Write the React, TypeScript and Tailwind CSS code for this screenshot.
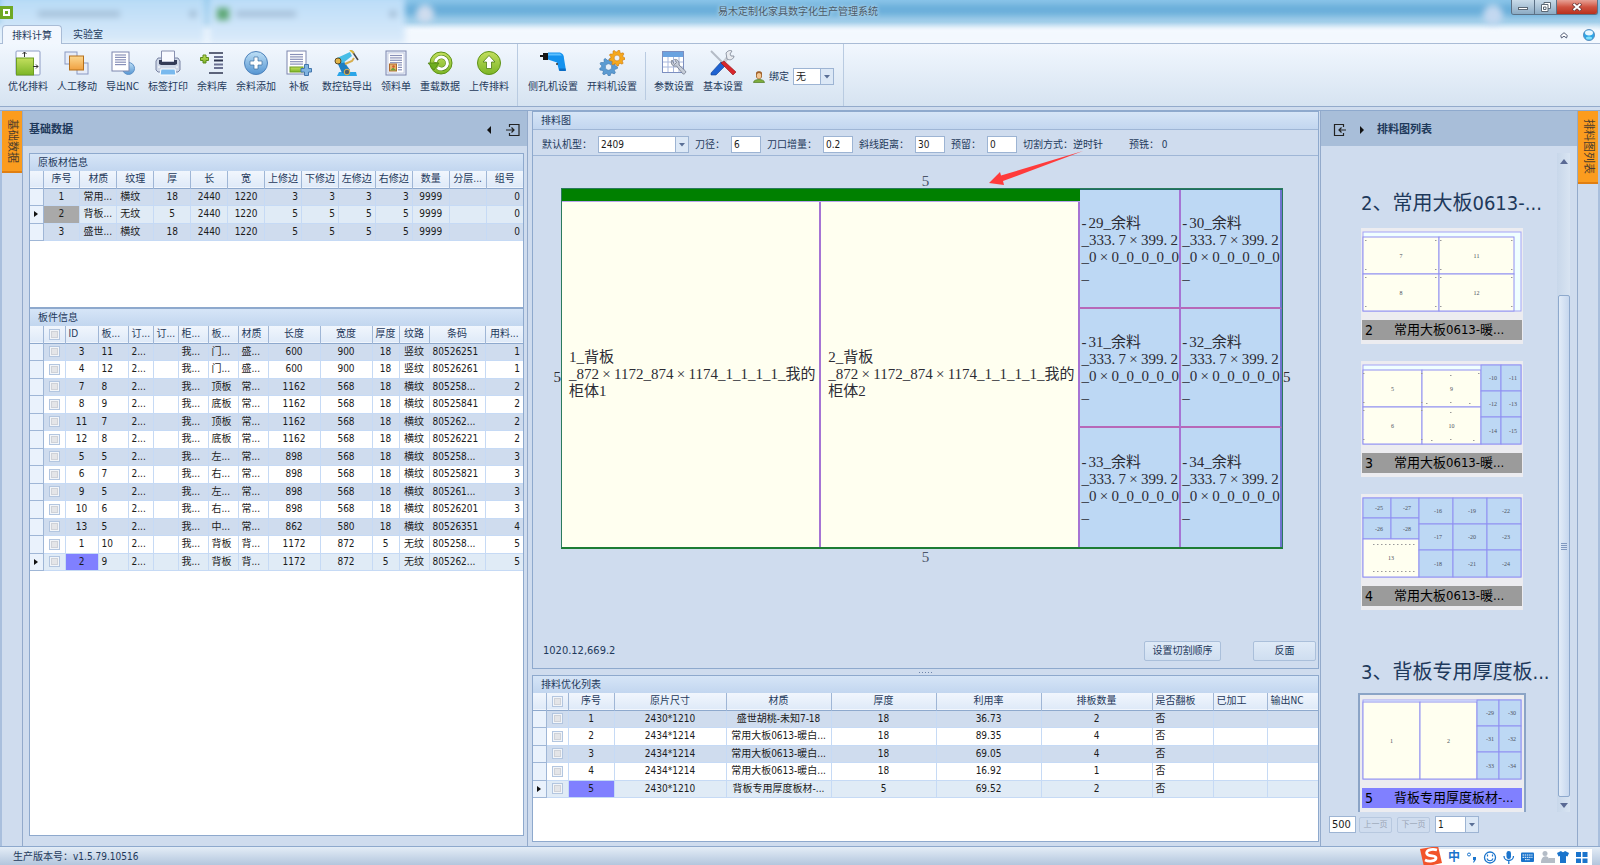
import type { ReactNode } from "react";
import { Fragment } from "react";
import clsx from "clsx";

// ---------- 数据 ----------

type Align = "left" | "center" | "right";

interface Column {
  title: string;
  width?: string;
  align?: Align;
  headAlign?: Align;
}

interface Piece {
  x: number;
  y: number;
  w: number;
  h: number;
  label: string;
  rest?: boolean;
}

interface SheetThumb {
  no: number;
  name: string;
  pieces: Piece[];
  holes?: [number, number][];
}

const BOARD_COLUMNS: Column[] = [
  { title: "序号" },
  { title: "材质", align: "left", headAlign: "center" },
  { title: "纹理", align: "left", headAlign: "center" },
  { title: "厚" },
  { title: "长" },
  { title: "宽" },
  { title: "上修边", align: "right" },
  { title: "下修边", align: "right" },
  { title: "左修边", align: "right" },
  { title: "右修边", align: "right" },
  { title: "数量" },
  { title: "分层..." },
  { title: "组号", align: "right" },
];

const BOARD_ROWS = [
  ["1", "常用...", "横纹", "18", "2440", "1220", "3", "3", "3", "3", "9999", "", "0"],
  ["2", "背板...", "无纹", "5", "2440", "1220", "5", "5", "5", "5", "9999", "", "0"],
  ["3", "盛世...", "横纹", "18", "2440", "1220", "5", "5", "5", "5", "9999", "", "0"],
];

const PART_COLUMNS: Column[] = [
  { title: "ID", width: "w-[33px]", headAlign: "left" },
  { title: "板...", width: "w-[30px]", align: "left" },
  { title: "订...", width: "w-[25px]", align: "left" },
  { title: "订...", width: "w-[25px]", align: "left" },
  { title: "柜...", width: "w-[30px]", align: "left" },
  { title: "板...", width: "w-[30px]", align: "left" },
  { title: "材质", width: "w-[30px]", align: "left" },
  { title: "长度", width: "w-[52px]" },
  { title: "宽度", width: "w-[52px]" },
  { title: "厚度", width: "w-[27px]" },
  { title: "纹路", width: "w-[30px]" },
  { title: "条码", width: "w-[56px]", align: "left", headAlign: "center" },
  { title: "用料...", align: "right" },
];

const PART_ROWS = [
  ["3", "11", "2...", "", "我...", "门...", "盛...", "600", "900", "18", "竖纹", "80526251", "1"],
  ["4", "12", "2...", "", "我...", "门...", "盛...", "600", "900", "18", "竖纹", "80526261", "1"],
  ["7", "8", "2...", "", "我...", "顶板", "常...", "1162", "568", "18", "横纹", "805258...", "2"],
  ["8", "9", "2...", "", "我...", "底板", "常...", "1162", "568", "18", "横纹", "80525841", "2"],
  ["11", "7", "2...", "", "我...", "顶板", "常...", "1162", "568", "18", "横纹", "805262...", "2"],
  ["12", "8", "2...", "", "我...", "底板", "常...", "1162", "568", "18", "横纹", "80526221", "2"],
  ["5", "5", "2...", "", "我...", "左...", "常...", "898", "568", "18", "横纹", "805258...", "3"],
  ["6", "7", "2...", "", "我...", "右...", "常...", "898", "568", "18", "横纹", "80525821", "3"],
  ["9", "5", "2...", "", "我...", "左...", "常...", "898", "568", "18", "横纹", "805261...", "3"],
  ["10", "6", "2...", "", "我...", "右...", "常...", "898", "568", "18", "横纹", "80526201", "3"],
  ["13", "5", "2...", "", "我...", "中...", "常...", "862", "580", "18", "横纹", "80526351", "4"],
  ["1", "10", "2...", "", "我...", "背板", "背...", "1172", "872", "5", "无纹", "805258...", "5"],
  ["2", "9", "2...", "", "我...", "背板", "背...", "1172", "872", "5", "无纹", "805262...", "5"],
];

const RESULT_COLUMNS: Column[] = [
  { title: "序号", width: "w-[46px]" },
  { title: "原片尺寸", width: "w-[112px]" },
  { title: "材质", width: "w-[105px]" },
  { title: "厚度", width: "w-[105px]" },
  { title: "利用率", width: "w-[105px]" },
  { title: "排板数量", width: "w-[111px]" },
  { title: "是否翻板", width: "w-[61px]", align: "left" },
  { title: "已加工", width: "w-[54px]", align: "left" },
  { title: "输出NC", align: "left" },
];

const RESULT_ROWS = [
  ["1", "2430*1210", "盛世胡桃-未知7-18", "18", "36.73", "2", "否", "", ""],
  ["2", "2434*1214", "常用大板0613-暖白...", "18", "89.35", "4", "否", "", ""],
  ["3", "2434*1214", "常用大板0613-暖白...", "18", "69.05", "4", "否", "", ""],
  ["4", "2434*1214", "常用大板0613-暖白...", "18", "16.92", "1", "否", "", ""],
  ["5", "2430*1210", "背板专用厚度板材-...", "5", "69.52", "2", "否", "", ""],
];

const REST_NUMBERS = [29, 30, 31, 32, 33, 34];

// 两列三行的余料块
const restGrid = (xs: number[], labels: string[]): Piece[] =>
  labels.map((label, i) => ({
    x: xs[i % 2],
    y: Math.floor(i / 2) * 26,
    w: xs[(i % 2) + 1] - xs[i % 2],
    h: Math.floor(i / 2) === 2 ? 27 : 26,
    label,
    rest: true,
  }));

const SHEETS: SheetThumb[] = [
  {
    no: 2,
    name: "常用大板0613-暖...",
    pieces: [
      { x: 0, y: 5, w: 76, h: 37, label: "7" },
      { x: 76, y: 5, w: 75, h: 37, label: "11" },
      { x: 0, y: 42, w: 76, h: 37, label: "8" },
      { x: 76, y: 42, w: 75, h: 37, label: "12" },
    ],
    holes: [
      [3, 9], [73, 9], [78, 9], [149, 9], [3, 38], [73, 38], [78, 38], [149, 38],
      [3, 46], [73, 46], [78, 46], [149, 46], [3, 75], [73, 75], [78, 75], [149, 75],
    ],
  },
  {
    no: 3,
    name: "常用大板0613-暖...",
    pieces: [
      { x: 0, y: 5, w: 59, h: 37, label: "5" },
      { x: 59, y: 5, w: 59, h: 37, label: "9" },
      { x: 0, y: 42, w: 59, h: 37, label: "6" },
      { x: 59, y: 42, w: 59, h: 37, label: "10" },
      ...restGrid([118, 138, 158], ["-10", "-11", "-12", "-13", "-14", "-15"]),
    ],
    holes: [
      [1, 9], [59, 9], [116, 9], [88, 11], [1, 38], [59, 38], [64, 39], [88, 38], [107, 39],
      [1, 46], [59, 46], [88, 48], [1, 75], [59, 75], [69, 76], [88, 75], [111, 76],
    ],
  },
  {
    no: 4,
    name: "常用大板0613-暖...",
    pieces: [
      { x: 0, y: 0, w: 28, h: 20, label: "-25", rest: true },
      { x: 28, y: 0, w: 28, h: 20, label: "-27", rest: true },
      { x: 0, y: 20, w: 28, h: 21, label: "-26", rest: true },
      { x: 28, y: 20, w: 28, h: 21, label: "-28", rest: true },
      { x: 0, y: 41, w: 56, h: 38, label: "13" },
      ...[16, 17, 18, 19, 20, 21, 22, 23, 24].map((n, i) => ({
        x: 56 + Math.floor(i / 3) * 34,
        y: (i % 3) * 26,
        w: 34,
        h: i % 3 === 2 ? 27 : 26,
        label: `-${n}`,
        rest: true,
      })),
    ],
    holes: [11, 15, 19, 23, 27, 31, 35, 39, 43, 47, 51].flatMap((x): [number, number][] => [
      [x, 47],
      [x, 74],
    ]),
  },
];

const ACTIVE_SHEET: SheetThumb = {
  no: 5,
  name: "背板专用厚度板材-...",
  pieces: [
    { x: 0, y: 2, w: 57, h: 77, label: "1" },
    { x: 57, y: 2, w: 57, h: 77, label: "2" },
    ...restGrid([114, 136, 158], ["-29", "-30", "-31", "-32", "-33", "-34"]),
  ],
};

// ---------- 图标 ----------

function Icon({ children }: { children: ReactNode }) {
  return (
    <svg viewBox="0 0 26 26" className="h-[26px] w-[26px]" aria-hidden="true">
      {children}
    </svg>
  );
}

function PaperLines({ x, y, w, n }: { x: number; y: number; w: number; n: number }) {
  return (
    <g stroke="#8890b8" strokeWidth="1.2">
      {Array.from({ length: n }, (_, i) => (
        <path key={i} d={`M${x} ${y + i * 2.4}h${w}`} />
      ))}
    </g>
  );
}

const gearPath = (cx: number, cy: number, r: number, teeth: number) => {
  const pts: string[] = [];
  for (let i = 0; i < teeth * 4; i++) {
    const a = (i / (teeth * 4)) * Math.PI * 2;
    const rr = i % 4 < 2 ? r : r * 0.76;
    pts.push(`${(cx + Math.cos(a) * rr).toFixed(2)} ${(cy + Math.sin(a) * rr).toFixed(2)}`);
  }
  const hole = r * 0.36;
  return `M${pts.join("L")}Z M${cx - hole} ${cy}a${hole} ${hole} 0 1 0 ${hole * 2} 0a${hole} ${hole} 0 1 0 ${-hole * 2} 0Z`;
};

const icons = {
  optimize: (
    <Icon>
      <rect x="1" y="1" width="24" height="24" rx="1" fill="#fbfcff" stroke="#8d9cc4" />
      <rect x="1.5" y="8" width="17" height="17" fill="url(#green)" stroke="#6d9e22" />
      <path d="M9.500 7V2M7.500 4l2-2 2 2M18 16.500h5M21 14.500l2 2-2 2" fill="none" stroke="#333" />
    </Icon>
  ),
  move: (
    <Icon>
      <rect x="1" y="2" width="12" height="12" fill="#e6ecf8" stroke="#8a99c2" />
      <rect x="13" y="13" width="11" height="11" fill="#e6ecf8" stroke="#8a99c2" />
      <rect x="5.500" y="6" width="14" height="14" fill="url(#orange)" stroke="#b5701d" />
    </Icon>
  ),
  exportNc: (
    <Icon>
      <circle cx="18.500" cy="18.500" r="6" fill="url(#blue)" stroke="#5f92c8" />
      <rect x="2" y="2" width="17" height="19" fill="#fff" stroke="#7c86ae" />
      <PaperLines x={5} y={5} w={11} n={5} />
    </Icon>
  ),
  print: (
    <Icon>
      <path d="M3 8h20l2 3v9l-2 2H3l-2-2v-9z" fill="#cfd8e8" stroke="#7882a2" />
      <path d="M6.500 1h13v11h-13z" fill="#f8faff" stroke="#8890b0" />
      <path d="M4 10h3v2h12v-2h3v4l-2 1H6l-2-1z" fill="#333b57" />
      <path d="M6 19h14l1 6H5z" fill="#79b9ee" stroke="#fff" />
      <path d="M3 17h2M21 17h2" stroke="#fff" />
    </Icon>
  ),
  store: (
    <Icon>
      <path d="M4 5h3v2.500h2.500v3H7V13H4v-2.500H1.500v-3H4z" fill="url(#green)" stroke="#5c8a1c" />
      <path d="M10 3h14M10 23h14" stroke="#2f3650" strokeWidth="1.500" />
      <path d="M15 7h9M15 14.500h9M15 18h9" stroke="#6a7192" strokeWidth="2" />
      <path d="M15 10.500h9" stroke="#2f3650" strokeWidth="2" />
    </Icon>
  ),
  add: (
    <Icon>
      <circle cx="13" cy="13" r="11.500" fill="url(#blue)" stroke="#4f83bb" />
      <path d="M11 7h4v4h4v4h-4v4h-4v-4H7v-4h4z" fill="#fff" stroke="#3e6f9f" strokeWidth=".7" />
    </Icon>
  ),
  patch: (
    <Icon>
      <rect x="1" y="1" width="19" height="23" fill="#fff" stroke="#7c86ae" />
      <PaperLines x={4} y={4.5} w={13} n={5} />
      <rect x="4" y="17" width="13" height="5" fill="url(#green)" stroke="#6d9e22" />
      <path d="M18.500 14.500h4v4h3v3.500h-3v3.500h-4V22h-3.500v-3.500h3.500z" fill="#7fb4e0" stroke="#4477ad" />
    </Icon>
  ),
  robot: (
    <Icon>
      <path d="M5 22h17l1 4H3z" fill="#2aa5e8" />
      <path d="M3 12l5-3 8 11-3 4-5-1z" fill="#1e7fc2" />
      <path d="M3 8l13-6 2 4-9 7-5-1z" fill="#47bde6" />
      <path d="M11 14l7-3 2-3" fill="none" stroke="#d7ae4e" strokeWidth="2" />
      <path d="M18 1l6 9" stroke="#444" strokeWidth="1.500" />
      <path d="M16 0l4 3" stroke="#d9b93c" strokeWidth="2" />
      <circle cx="4" cy="11" r="3" fill="#e2b548" stroke="#5c4b25" />
      <circle cx="13" cy="22" r="2.800" fill="#51606e" stroke="#e2b548" />
    </Icon>
  ),
  picking: (
    <Icon>
      <rect x="3" y="1" width="20" height="24" fill="#e9eef8" stroke="#7c86ae" />
      <rect x="5" y="3" width="16" height="20" fill="#fff" stroke="#a8b2cf" strokeWidth=".6" />
      <PaperLines x={7} y={5.5} w={12} n={4} />
      <PaperLines x={15} y={15} w={4} n={3} />
      <rect x="6.500" y="14" width="7" height="7" fill="#e8b36a" stroke="#b06a2c" />
      <path d="M7 20.500l3-3 3.500 3" fill="#6f9f3a" />
      <circle cx="10.500" cy="16.500" r="1.300" fill="#d2582e" />
    </Icon>
  ),
  reload: (
    <Icon>
      <circle cx="14" cy="13" r="11" fill="url(#green)" stroke="#5d9217" />
      <path d="M10.500 17.500a6 6 0 1 0-2-5" fill="none" stroke="#4f7d15" strokeWidth="4" />
      <path d="M10.500 17.500a6 6 0 1 0-2-5.500" fill="none" stroke="#fff" strokeWidth="3" />
      <path d="M1 13h11l-5 7z" fill="#6fae20" stroke="#4f7d15" strokeWidth=".7" />
    </Icon>
  ),
  upload: (
    <Icon>
      <circle cx="13" cy="13" r="11.500" fill="url(#green)" stroke="#5d9217" />
      <path d="M13 5.500l6 6.500h-3.500v6.500h-5V12H7z" fill="#fff" stroke="#4f7d15" strokeWidth=".8" />
    </Icon>
  ),
  drill: (
    <Icon>
      <path d="M0 5h3v2H0zM3 3h5v7H3z" fill="#161616" />
      <path d="M8 2.500h12c3 1 4 3 4 6l2 12h-7l-2-8-9-3z" fill="#1492ee" />
      <path d="M8 3.500h12l2 2H8z" fill="#5cc0ff" />
      <path d="M19 18.500h6.500l.4 2.500h-6.500z" fill="#0a6cc4" />
      <circle cx="17" cy="14" r="1" fill="#333" />
    </Icon>
  ),
  gears: (
    <Icon>
      <path d={gearPath(9.5, 17, 9, 9)} fill="#5b9bd2" stroke="#3b74ab" strokeWidth=".6" fillRule="evenodd" />
      <path d={gearPath(18, 8, 8, 9)} fill="#f5a81d" stroke="#c97712" strokeWidth=".6" fillRule="evenodd" />
    </Icon>
  ),
  params: (
    <Icon>
      <rect x="1.500" y="1.500" width="21" height="21" fill="#fff" stroke="#7c8fc0" />
      <rect x="2" y="2" width="20" height="5" fill="#6aa3e0" />
      <path d="M2 12h20M2 17h20M7 7v15M12.500 7v15M18 7v15" stroke="#a9b8dc" />
      <path d="M11 10c-2 4 1 7 4.500 6l6 7.500c1 1.500 4-.5 3-2.500l-6.500-6c.5-4-2-6-4.500-5.500l2 3-2 2z" fill="#c5ccd8" stroke="#6d7688" strokeWidth=".8" />
    </Icon>
  ),
  tools: (
    <Icon>
      <path d="M1 1l13 13" stroke="#b4bbc6" strokeWidth="2" />
      <path d="M12 15l6-8" stroke="#c9ced6" strokeWidth="3.500" />
      <path d="M16 3c3-4 6-2 6-2l-2 3 1 2h3c0 3-4 5-7 3z" fill="#e8ebf0" stroke="#7b8493" strokeWidth=".8" />
      <path d="M11 12l4 4-9 9-5 0v-2z" fill="#1f63d2" stroke="#11408f" strokeWidth=".6" />
      <path d="M11 13l3-2 12 11-3 3z" fill="#d8262c" stroke="#8f1216" strokeWidth=".6" />
    </Icon>
  ),
};

function SvgDefs() {
  return (
    <svg className="absolute h-0 w-0" aria-hidden="true">
      <defs>
        <linearGradient id="green" x1="0" y1="0" x2="0" y2="1">
          <stop offset="0" stopColor="#c3df5e" />
          <stop offset="1" stopColor="#7cb526" />
        </linearGradient>
        <linearGradient id="orange" x1="0" y1="0" x2="0" y2="1">
          <stop offset="0" stopColor="#fcd890" />
          <stop offset="1" stopColor="#f0a040" />
        </linearGradient>
        <linearGradient id="blue" x1="0" y1="0" x2="0" y2="1">
          <stop offset="0" stopColor="#bfe0f6" />
          <stop offset="1" stopColor="#5595d2" />
        </linearGradient>
      </defs>
    </svg>
  );
}

// 停靠面板的箭头方框
function DockIcon({ flip }: { flip?: boolean }) {
  return (
    <svg viewBox="0 0 14 12" className="h-3 w-3.5" fill="none" stroke="#222" aria-hidden="true">
      {flip ? (
        <path d="M10.500 3V.500H1.500v11h9V9M13 6H6M8.500 3.500L6 6l2.500 2.500" strokeWidth="1.200" />
      ) : (
        <path d="M3.500 3V.500h9.500v11H3.500V9M0 6h8M5.500 3.500L8 6 5.500 8.500" strokeWidth="1.200" />
      )}
    </svg>
  );
}

// ---------- 通用控件 ----------

function Combo({ id, label, value, className }: { id: string; label?: string; value: string; className: string }) {
  return (
    <div className={clsx("relative flex h-[17px] border border-[#9db4d3] bg-white", className)}>
      <select
        id={id}
        aria-label={label}
        defaultValue={value}
        className="w-full appearance-none bg-transparent pl-0.5 text-[#1b1b1b] outline-none"
      >
        <option>{value}</option>
      </select>
      <span className="pointer-events-none absolute inset-y-0 right-0 flex w-[13px] items-center justify-center border-l border-[#9db4d3] bg-[#dce8f6]">
        <svg viewBox="0 0 6 4" className="h-1 w-1.5" fill="#5a6f96" aria-hidden="true">
          <path d="M0 0h6L3 3.500z" />
        </svg>
      </span>
    </div>
  );
}

function Field({ id, label, value }: { id: string; label: string; value: string }) {
  return (
    <>
      <label htmlFor={id}>{label}</label>
      <input
        id={id}
        defaultValue={value}
        className="h-[17px] w-[30px] border border-[#9db4d3] bg-white px-0.5 text-[#1b1b1b] outline-none"
      />
    </>
  );
}

function CheckBox({ label }: { label: string }) {
  return (
    <input
      type="checkbox"
      aria-label={label}
      className="mx-auto block h-[11px] w-[11px] appearance-none border border-[#b3c6e0] bg-[#e4e5e8] shadow-[inset_0_0_0_1px_#f2f5f9,inset_0_0_0_2px_#cfd2d8]"
    />
  );
}

function GroupTitle({ children }: { children: ReactNode }) {
  return (
    <h3 className="h-[17px] shrink-0 bg-linear-to-b from-[#d6e5f7] to-[#c2d6ef] pl-2 leading-[17px]">
      {children}
    </h3>
  );
}

const alignClass: Record<Align, string> = {
  left: "text-left",
  center: "text-center",
  right: "text-right",
};

interface DataGridProps {
  name: string;
  columns: Column[];
  rows: string[][];
  current: number;
  currentCell: string;
  checkable?: boolean;
}

function DataGrid({ name, columns, rows, current, currentCell, checkable }: DataGridProps) {
  return (
    <table className="w-full table-fixed border-collapse" aria-label={name}>
      <colgroup>
        <col className="w-[13px]" />
        {checkable && <col className="w-[22px]" />}
        {columns.map((col, i) => (
          <col key={i} className={col.width} />
        ))}
      </colgroup>
      <thead>
        <tr className="h-[17px] border-b border-[#8ea9cd] bg-linear-to-b from-[#f1f6fd] to-[#dfeaf8]">
          <th className="border-r border-[#9fb6d6] p-0" />
          {checkable && (
            <th className="border-r border-[#9fb6d6] p-0">
              <CheckBox label={`${name}全选`} />
            </th>
          )}
          {columns.map((col, i) => (
            <th
              key={i}
              className={clsx(
                "overflow-hidden border-r border-[#9fb6d6] p-0 font-normal whitespace-nowrap last:border-r-0",
                col.headAlign === "left" || (col.align === "left" && !col.headAlign) ? "pl-[3px] text-left" : "text-center",
              )}
            >
              {col.title}
            </th>
          ))}
        </tr>
      </thead>
      <tbody className="text-[#1b1b1b]">
        {rows.map((row, r) => (
          <tr
            key={r}
            className={clsx(
              "h-[17px] even:h-[18px]",
              r === current ? "bg-[#e0ebf6]" : r % 2 === 0 ? "bg-[#cfdcee]" : "bg-white",
            )}
          >
            <td className="border-r border-b border-[#9fb6d6] bg-[#eaf2fc] p-0">
              {r === current && (
                <svg viewBox="0 0 4 6" className="mx-auto h-1.5 w-1" aria-hidden="true">
                  <path d="M0 0l4 3-4 3z" fill="#111" />
                </svg>
              )}
            </td>
            {checkable && (
              <td className="border-r border-b border-[#c6daf5] p-0">
                <CheckBox label={`${name}第${r + 1}行`} />
              </td>
            )}
            {row.map((text, c) => (
              <td
                key={c}
                className={clsx(
                  "overflow-hidden border-r border-b border-[#c6daf5] px-[3px] py-0 leading-4 whitespace-nowrap last:border-r-0",
                  alignClass[columns[c].align ?? "center"],
                  r === current && c === 0 && currentCell,
                )}
              >
                {text}
              </td>
            ))}
          </tr>
        ))}
      </tbody>
    </table>
  );
}

// ---------- 标题栏与功能区 ----------

function TitleBar() {
  return (
    <header className="relative flex h-[44px] flex-col justify-between overflow-hidden bg-linear-to-b from-[#8cc6ea] via-[#a3cfea] via-50% to-[#f6faff] to-70%">
      {/* 玻璃边框后面透出的窗口 */}
      <div className="absolute inset-0 blur-[3px]" aria-hidden="true">
        <div className="absolute top-1 right-0 left-[405px] h-3 bg-[#57a3d3]/70" />
        <div className="absolute -top-1 left-0 h-12 w-[205px] bg-linear-to-b from-[#b5daf6] to-[#dcebfa]" />
        <div className="absolute -top-1 left-[209px] h-12 w-[196px] bg-linear-to-b from-[#b9dcf8] to-[#dcebfa]" />
        <div className="absolute top-[11px] left-[38px] h-1.5 w-[82px] bg-[#8fa9c2]/60" />
        <div className="absolute top-[11px] left-[190px] h-1.5 w-1.5 bg-[#8fa9c2]/80" />
        <div className="absolute top-[8px] left-[217px] h-3 w-3 bg-[#5ca774]" />
        <div className="absolute top-[11px] left-[236px] h-1.5 w-[60px] bg-[#8fa9c2]/60" />
        <div className="absolute top-[11px] left-[390px] h-1.5 w-1.5 bg-[#8fa9c2]/80" />
        <div className="absolute top-[5px] left-[416px] h-[18px] w-[18px] rounded-full bg-[#cfdcee]" />
        <div className="absolute top-[5px] right-[97px] h-[20px] w-[20px] rounded-full bg-[#c3d8f0]" />
        <div className="absolute right-0 bottom-0 left-[405px] h-[15px] bg-[#f3f8fe]" />
      </div>

      <div className="relative flex h-[25px] items-start">
        <span className="mt-1.5 flex h-[13px] w-[13px] items-center justify-center bg-[#6fa823]">
          <span className="h-[7px] w-[7px] border-2 border-white bg-[#6fa823]" />
        </span>
        <h1 className="flex-1 pl-[72px] text-center leading-6 text-[#4b5a68] [text-shadow:0_0_4px_#fff]">易木定制化家具数字化生产管理系统</h1>
        <div className="mr-0.5 flex h-[15px] overflow-hidden rounded-b-[3px] border border-t-0 border-[#5c7186] text-white">
          <button type="button" aria-label="最小化" className="flex w-[23px] items-end justify-center border-r border-[#5c7186] bg-linear-to-b from-[#c9dbe9] to-[#8cabc4] pb-1">
            <span className="h-[3px] w-2.5 border border-[#5b6875] bg-white" />
          </button>
          <button type="button" aria-label="还原" className="flex w-[22px] items-center justify-center border-r border-[#5c7186] bg-linear-to-b from-[#c9dbe9] to-[#8cabc4]">
            <svg viewBox="0 0 10 10" className="h-2.5 w-2.5" fill="#fff" stroke="#5b6875" aria-hidden="true">
              <path d="M3 .500h6.500v6H3z" />
              <path d="M.500 2.500h6.500v7H.500zM2.500 5h2.500v2.500H2.500z" />
            </svg>
          </button>
          <button type="button" aria-label="关闭" className="flex w-[40px] items-center justify-center bg-linear-to-b from-[#e6a196] via-[#cf5240] to-[#b8301c]">
            <svg viewBox="0 0 10 8" className="h-2 w-2.5" aria-hidden="true">
              <path d="M1 .500l8 7M9 .500l-8 7" stroke="#6b3a3a" strokeWidth="3.500" />
              <path d="M1.500 1l7 6M8.500 1l-7 6" stroke="#fff" strokeWidth="2" />
            </svg>
          </button>
        </div>
      </div>

      <nav className="relative flex items-end border-b border-[#a9bcd6]">
        <button type="button" className="-mb-px ml-0.5 h-[19px] w-[60px] rounded-t-sm border border-b-0 border-[#a9bcd6] bg-[#f2f7fe] pt-0.5">
          排料计算
        </button>
        <button type="button" className="ml-[11px] h-[17px] pt-px">
          实验室
        </button>
        <div className="mr-[5px] mb-0.5 ml-auto flex items-center gap-[15px]">
          <svg viewBox="0 0 8 7" className="h-[7px] w-2" fill="#fff" stroke="#555f78" aria-hidden="true">
            <path d="M.700 3.500L4 .700l3.300 2.800L6.500 6 4 4.200 1.500 6z" />
          </svg>
          <svg viewBox="0 0 12 12" className="h-3 w-3" aria-hidden="true">
            <circle cx="6" cy="6" r="5.500" fill="#2fa5e6" stroke="#5c8fbd" />
            <ellipse cx="6" cy="3.800" rx="4" ry="2.600" fill="#e9f7ff" />
            <ellipse cx="6" cy="9" rx="3" ry="1.500" fill="#7fe0fb" />
          </svg>
        </div>
      </nav>
    </header>
  );
}

function RibbonButton({ icon, children }: { icon: ReactNode; children: ReactNode }) {
  return (
    <button type="button" className="flex min-w-[36px] flex-col items-center gap-1 px-1 pt-1.5 leading-[14px] whitespace-nowrap">
      {icon}
      {children}
    </button>
  );
}

function Ribbon() {
  return (
    <div className="flex h-[63px] shrink-0 border-b border-[#93aacb] bg-linear-to-b from-[#f1f7fe] to-[#d6e3f1]">
      <div className="flex items-start gap-px border-r border-[#b9cbe1] pr-1 pl-1">
        <RibbonButton icon={icons.optimize}>优化排料</RibbonButton>
        <RibbonButton icon={icons.move}>人工移动</RibbonButton>
        <RibbonButton icon={icons.exportNc}>导出NC</RibbonButton>
        <RibbonButton icon={icons.print}>标签打印</RibbonButton>
        <RibbonButton icon={icons.store}>余料库</RibbonButton>
        <RibbonButton icon={icons.add}>余料添加</RibbonButton>
        <RibbonButton icon={icons.patch}>补板</RibbonButton>
        <RibbonButton icon={icons.robot}>数控钻导出</RibbonButton>
        <RibbonButton icon={icons.picking}>领料单</RibbonButton>
        <RibbonButton icon={icons.reload}>重载数据</RibbonButton>
        <RibbonButton icon={icons.upload}>上传排料</RibbonButton>
      </div>
      <div className="flex items-start gap-px border-r border-[#b9cbe1] pr-[9px] pl-1.5">
        <RibbonButton icon={icons.drill}>侧孔机设置</RibbonButton>
        <RibbonButton icon={icons.gears}>开料机设置</RibbonButton>
        <span className="mx-[3px] mt-2 h-12 w-px bg-[#b9cbe1]" />
        <RibbonButton icon={icons.params}>参数设置</RibbonButton>
        <RibbonButton icon={icons.tools}>基本设置</RibbonButton>
        <div className="mt-6 ml-[5px] flex items-center gap-1">
          <svg viewBox="0 0 12 12" className="h-3 w-3" aria-hidden="true">
            <path d="M.500 11.500c0-4 11-4 11 0z" fill="#7fae3c" stroke="#4f7a22" strokeWidth=".7" />
            <path d="M3 2c0-2.500 6-2.500 6 0v4c-2 3-4 3-6 0z" fill="#a0622c" />
            <ellipse cx="6" cy="4.800" rx="2.200" ry="2.800" fill="#f2c795" />
          </svg>
          <label htmlFor="bind">绑定</label>
          <Combo id="bind" value="无" className="w-[41px]" />
        </div>
      </div>
    </div>
  );
}

// ---------- 左侧基础数据 ----------

function SideTab({ children }: { children: ReactNode }) {
  return (
    <button type="button" className="w-5 border-b-2 border-[#e07f12] bg-[#fb9c1e] py-2">
      <span className="mx-auto block w-5 text-[11px] leading-5 whitespace-nowrap text-[#4b3d2c] [text-orientation:sideways] [writing-mode:vertical-rl]">
        {children}
      </span>
    </button>
  );
}

function LeftPanel() {
  return (
    <section className="flex w-[506px] shrink-0 flex-col border-x border-[#93aacb]">
      <div className="flex h-[35px] shrink-0 items-center bg-[#a8bed9] pt-0.5 pr-[7px] pl-1.5">
        <h2 className="flex-1 text-[11px] font-bold">基础数据</h2>
        <svg viewBox="0 0 4 8" className="mr-[15px] h-2 w-1" aria-hidden="true">
          <path d="M4 0v8L0 4z" fill="#111" />
        </svg>
        <button type="button" aria-label="停靠基础数据">
          <DockIcon />
        </button>
      </div>
      <div className="flex flex-1 flex-col pt-[7px] pr-[3px] pb-2.5 pl-1.5">
        <div className="h-[155px] border border-[#8ea9cd] bg-white">
          <GroupTitle>原板材信息</GroupTitle>
          <DataGrid name="原板材信息" columns={BOARD_COLUMNS} rows={BOARD_ROWS} current={1} currentCell="bg-[#a9a9a9]" />
        </div>
        <div className="flex-1 border border-[#8ea9cd] bg-white">
          <GroupTitle>板件信息</GroupTitle>
          <DataGrid name="板件信息" columns={PART_COLUMNS} rows={PART_ROWS} current={12} currentCell="bg-[#8080ff]" checkable />
        </div>
      </div>
    </section>
  );
}

// ---------- 中间排料图 ----------

// 图纸标注按半角/全角等宽排布
function PieceText({ text }: { text: string }) {
  return (
    <span className="block h-[17px] whitespace-nowrap">
      {text.split(/([×.-])/).map((part, i) => (
        <Fragment key={i}>
          {part === "×" ? (
            <span className="inline-block w-[15px] text-center">×</span>
          ) : part === "." || part === "-" ? (
            <span className="inline-block w-[7px]">{part}</span>
          ) : (
            part
          )}
        </Fragment>
      ))}
    </span>
  );
}

function CuttingSheet() {
  return (
    <div className="flex aspect-[2/1] flex-1 border border-b-2 border-[#2a7a5c] border-b-[#1d7d34] bg-[#fffff0] leading-[17px]">
      <div className="flex w-[72%] flex-col">
        <div className="h-3 bg-[#008000]" />
        <div className="flex flex-1 border-t border-[#b9a6ec]">
          {[1, 2].map((n) => (
            <div key={n} className="flex flex-1 items-center border-r-2 border-[#a674d4] pl-[7px]">
              <div>
                <PieceText text={`${n}_背板`} />
                <PieceText text="_872×1172_874×1174_1_1_1_1_我的" />
                <PieceText text={`柜体${n}`} />
              </div>
            </div>
          ))}
        </div>
      </div>
      <div className="grid flex-1 grid-cols-2 grid-rows-3 border-t border-[#1f6a66] bg-[#bdd8f4]">
        {REST_NUMBERS.map((n) => (
          <div
            key={n}
            className={clsx(
              "flex items-center border-r-2 pl-px",
              n % 2 ? "border-r-[#a674d4]" : "border-r-[#6f74cf]",
              n < 33 && "border-b-2 border-b-[#b768b8]",
            )}
          >
            <div>
              <PieceText text={`-${n}_余料`} />
              <PieceText text="_333.7×399.2" />
              <PieceText text="_0×0_0_0_0_0" />
              <PieceText text="_" />
            </div>
          </div>
        ))}
      </div>
    </div>
  );
}

function NestingPanel() {
  return (
    <div className="flex flex-1 flex-col border border-[#8ea9cd]">
      <GroupTitle>排料图</GroupTitle>
      <div className="flex h-[27px] shrink-0 items-center gap-1.5 border-y border-[#9fb6d6] pt-1 pl-[9px] whitespace-nowrap">
        <label htmlFor="machine">默认机型：</label>
        <Combo id="machine" value="2409" className="w-[91px]" />
        <Field id="diameter" label="刀径：" value="6" />
        <Field id="increment" label="刀口增量：" value="0.2" />
        <Field id="slope" label="斜线距离：" value="30" />
        <Field id="reserve" label="预留：" value="0" />
        <span>切割方式：逆时针</span>
        <span className="ml-5">预铣： 0</span>
      </div>
      <div className="relative flex flex-1 flex-col">
        <div className="font-['Liberation_Serif','Noto_Sans_CJK_SC',serif] text-[15px] text-[#2c2c34]">
          <p className="pt-[18px] text-center leading-[14px] text-[#4a5568]">5</p>
          <div className="flex items-center text-[#2c2c34]">
            <span className="w-7 pt-4 text-right">5</span>
            <CuttingSheet />
            <span className="w-[35px] pt-4">5</span>
          </div>
          <p className="text-center leading-4 text-[#4a5568]">5</p>
        </div>
        <svg viewBox="0 0 96 36" className="absolute -top-1.5 left-[456px] h-9 w-24" aria-hidden="true">
          <path d="M0 33L11 22l1 3.500L94 1 14 31l1 4z" fill="#ff3b3b" />
        </svg>
        <div className="mt-auto flex items-center pb-[7px]">
          <span className="flex-1 pl-2.5 text-[11px]">1020.12,669.2</span>
          <button type="button" className="mr-8 h-5 w-[77px] rounded-xs border border-[#aabfda] bg-linear-to-b from-[#dfeaf7] to-[#cfdef0]">
            设置切割顺序
          </button>
          <button type="button" className="mr-0.5 h-5 w-[63px] rounded-xs border border-[#aabfda] bg-linear-to-b from-[#dfeaf7] to-[#cfdef0]">
            反面
          </button>
        </div>
      </div>
    </div>
  );
}

function CenterPanel() {
  return (
    <section className="flex min-w-0 flex-1 flex-col pr-px pb-1 pl-1">
      <NestingPanel />
      <div className="flex h-[6px] shrink-0 items-center justify-center gap-0.5">
        {[0, 1, 2, 3, 4].map((i) => (
          <span key={i} className="h-px w-px bg-[#6f86ab]" />
        ))}
      </div>
      <div className="h-[167px] shrink-0 border border-[#8ea9cd] bg-white">
        <GroupTitle>排料优化列表</GroupTitle>
        <DataGrid name="排料优化列表" columns={RESULT_COLUMNS} rows={RESULT_ROWS} current={4} currentCell="bg-[#8080ff]" checkable />
      </div>
    </section>
  );
}

// ---------- 右侧排料图列表 ----------

function SheetCard({ sheet, active }: { sheet: SheetThumb; active?: boolean }) {
  return (
    <button
      type="button"
      className={clsx(
        "block text-left",
        active ? "-mx-[3px] w-[168px] border-2 border-b-0 border-[#8ba4c6] bg-[#ececf0] px-0.5 pt-1" : "w-[162px] bg-[#ececf0] px-px pt-[3px]",
      )}
    >
      <svg viewBox="-1 -1 160 81" className="block h-[81px] w-[160px]" aria-hidden="true">
        <rect width="158" height="79" fill="#f0ffff" stroke="#a3a3f5" />
        {sheet.pieces.map((p) => (
          <g key={p.label}>
            <rect x={p.x} y={p.y} width={p.w} height={p.h} fill={p.rest ? "#bdd8f4" : "#fffff0"} stroke="#9090f2" />
            <text
              x={p.x + p.w / 2 + (p.rest ? 2 : 0)}
              y={p.y + p.h / 2 + 2}
              textAnchor="middle"
              className="fill-[#4c525c] font-['Liberation_Serif',serif] text-[6px]"
            >
              {p.label}
            </text>
          </g>
        ))}
        {sheet.holes?.map(([x, y]) => (
          <rect key={`${x}-${y}`} x={x - 1} y={y - 1} width="1.500" height="1" fill="#9a9a9a" />
        ))}
      </svg>
      <span
        className={clsx(
          "mt-2 flex h-5 items-center pl-[3px] font-['DejaVu_Sans_Condensed','Noto_Sans_CJK_SC',sans-serif] text-[13px] whitespace-nowrap text-black",
          active ? "bg-[#8080ff]" : "bg-[#9b9b9b]",
        )}
      >
        <span className="w-[29px] text-[14px]">{sheet.no}</span>
        {sheet.name}
      </span>
      <span className="block h-1" />
    </button>
  );
}

function RightPanel() {
  return (
    <section className="flex w-[258px] shrink-0 flex-col border-x border-[#93aacb]">
      <div className="flex h-[35px] shrink-0 items-center bg-[#a8bed9] pt-0.5 pl-3">
        <button type="button" aria-label="停靠排料图列表">
          <DockIcon flip />
        </button>
        <svg viewBox="0 0 4 8" className="mx-[13px] h-2 w-1" aria-hidden="true">
          <path d="M0 0v8l4-4z" fill="#111" />
        </svg>
        <h2 className="text-[11px] font-bold">排料图列表</h2>
      </div>
      <div className="flex pt-[7px] pr-[7px]">
        <div className="min-w-0 flex-1 pl-10">
          <h3 className="pt-9 text-[20px] leading-7 whitespace-nowrap">2、常用大板0613-...</h3>
          <div className="mt-[11px] flex flex-col gap-[17px]">
            {SHEETS.map((sheet) => (
              <SheetCard key={sheet.no} sheet={sheet} />
            ))}
          </div>
          <h3 className="mt-12 mb-[7px] text-[20px] leading-7 whitespace-nowrap">3、背板专用厚度板...</h3>
          <SheetCard sheet={ACTIVE_SHEET} active />
        </div>
        <div className="flex w-[13px] flex-col items-center bg-linear-to-r from-[#c8d7ea] to-[#d8e4f2]">
          <svg viewBox="0 0 8 5" className="mt-1.5 h-[5px] w-2" aria-hidden="true">
            <path d="M4 0l4 5H0z" fill="#5a6a94" />
          </svg>
          <div className="mt-auto flex h-[502px] w-3 flex-col items-center justify-center gap-px rounded-xs border border-[#8ea9cd] bg-linear-to-r from-[#e2ecf8] to-[#c6d7ee]">
            {[0, 1, 2, 3].map((i) => (
              <span key={i} className="h-px w-1.5 bg-[#8098bf]" />
            ))}
          </div>
          <svg viewBox="0 0 8 5" className="mt-1.5 mb-1 h-[5px] w-2" aria-hidden="true">
            <path d="M0 0h8L4 5z" fill="#5a6a94" />
          </svg>
        </div>
      </div>
      <div className="mt-1 flex items-center pl-2">
        <input
          aria-label="每页数量"
          defaultValue="500"
          className="h-[17px] w-[27px] border border-[#9db4d3] bg-white px-0.5 text-[11px] text-[#1b1b1b] outline-none"
        />
        <button type="button" disabled className="ml-[3px] h-4 w-[33px] rounded-xs border border-[#b7c8df] text-[8px] leading-3 text-[#9aa5b5]">
          上一页
        </button>
        <button type="button" disabled className="ml-[5px] h-4 w-[33px] rounded-xs border border-[#b7c8df] text-[8px] leading-3 text-[#9aa5b5]">
          下一页
        </button>
        <Combo id="page" label="页码" value="1" className="ml-[5px] w-[44px]" />
      </div>
    </section>
  );
}

// ---------- 状态栏 ----------

function InputMethodBar() {
  return (
    <svg viewBox="0 0 174 19" className="h-[19px] w-[174px]" fill="#1a74cc" aria-hidden="true">
      <rect x="12" y="2" width="160" height="17" fill="#fff" />
      <path d="M0 2l18-3 4 17-18 4z" fill="#f2542a" />
      <path d="M17 3C11 1 5 4 7 7s9 1 9 4-7 4-11 2" fill="none" stroke="#fff" strokeWidth="2.800" />
      <text x="34" y="14" textAnchor="middle" className="font-['Noto_Sans_CJK_SC',sans-serif] text-[12px] font-bold">
        中
      </text>
      <circle cx="49" cy="7.500" r="1.500" fill="none" stroke="#1a74cc" />
      <path d="M53 10h3v2.500l-2 3h-1l1-2.500h-1z" />
      <circle cx="70" cy="10.500" r="5.500" fill="none" stroke="#1a74cc" strokeWidth="1.300" />
      <path d="M67.500 7.500v2M72.500 7.500v2M67 11.500c1 3 5 3 6 0" fill="none" stroke="#1a74cc" strokeWidth="1.200" />
      <rect x="86.500" y="4" width="4.500" height="8" rx="2.200" />
      <path d="M84 9c0 6 9.500 6 9.500 0M88.800 13.500V17" fill="none" stroke="#1a74cc" strokeWidth="1.300" />
      <rect x="101" y="5.500" width="13" height="9.500" rx="1" />
      <path d="M102.500 8h10M102.500 10.300h10M105 12.700h5" stroke="#fff" strokeDasharray="1.500 .7" />
      <g fill="#b4bcc6">
        <circle cx="125" cy="6.500" r="2.500" />
        <path d="M121 16c0-8 7-8 8-4v4zM129 11h6v5h-6z" />
      </g>
      <path d="M137 6l4-2c1 1.500 3 1.500 4 0l4 2-1.500 3.500-1.500-.5v7h-6V9l-1.500.5z" />
      <path d="M156 5h5v5h-5zM162.500 5h5v5h-5zM156 11.500h5v4.500h-5zM162.500 11.500h5v4.500h-5z" />
    </svg>
  );
}

export default function App() {
  return (
    <div className="flex min-h-screen flex-col bg-[#cfdcee] font-['DejaVu_Sans_Condensed','Noto_Sans_CJK_SC',sans-serif] text-[10px] leading-4 text-[#1e395b]">
      <SvgDefs />
      <TitleBar />
      <Ribbon />
      <main className="mt-[3px] flex flex-1 border-t border-[#8ea9cd]">
        <div className="flex w-[22px] shrink-0 items-start border-l-2 border-[#a9bfdd]">
          <SideTab>基础数据</SideTab>
        </div>
        <LeftPanel />
        <CenterPanel />
        <RightPanel />
        <div className="flex w-[22px] shrink-0 items-start border-r-2 border-[#a9bfdd]">
          <SideTab>排料图列表</SideTab>
        </div>
      </main>
      <footer className="flex h-[19px] shrink-0 items-center border-t border-[#8ea9cd] bg-linear-to-b from-[#e4edf7] to-[#b3c6dd] pr-[6px] pl-[13px]">
        <span className="flex-1 pt-0.5">生产版本号：v1.5.79.10516</span>
        <InputMethodBar />
      </footer>
    </div>
  );
}
